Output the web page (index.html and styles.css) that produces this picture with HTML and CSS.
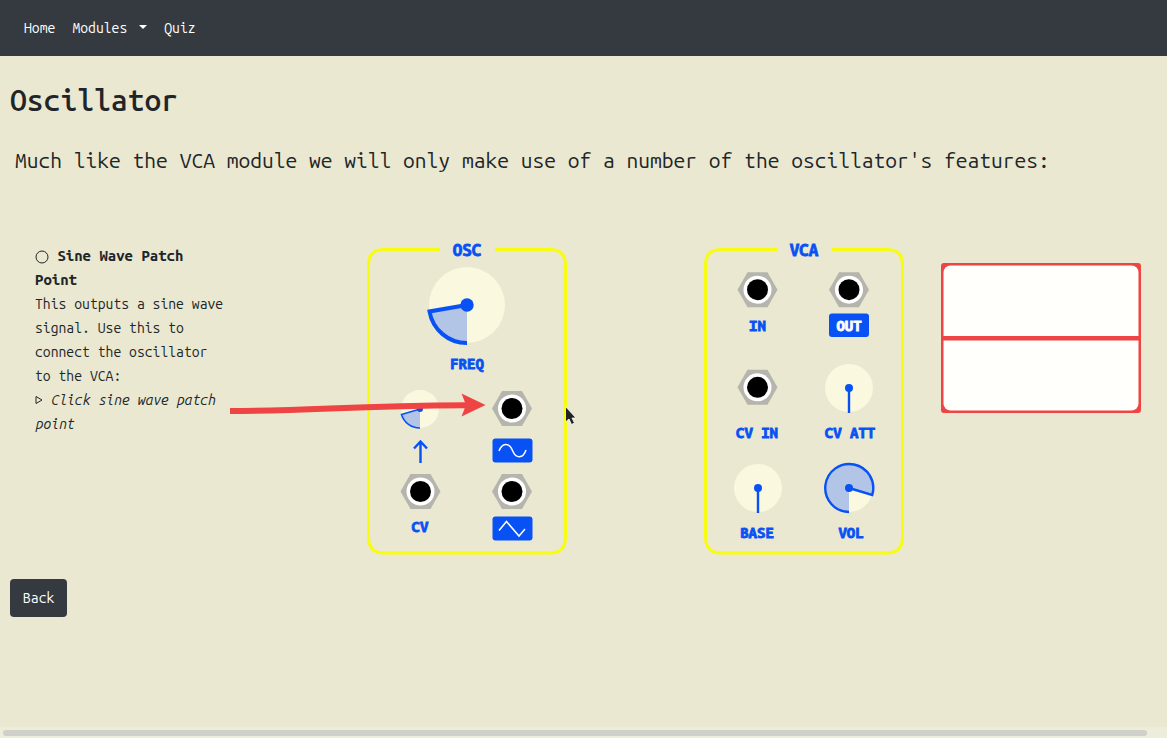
FILE: index.html
```html
<!DOCTYPE html>
<html lang="en">
<head>
<meta charset="utf-8">
<meta name="viewport" content="width=device-width, initial-scale=1">
<title>Oscillator</title>
<link rel="stylesheet" href="styles.css">
</head>
<body>
<nav class="navbar">
  <a href="#">Home</a>
  <a href="#" class="toggle">Modules<span class="caret"></span></a>
  <a href="#">Quiz</a>
</nav>
<main class="page">
  <h1>Oscillator</h1>
  <p class="lead">Much like the VCA module we will only make use of a number of the oscillator's features:</p>
  <section class="stage">
    <div class="notes">
      <strong><svg class="ring" viewBox="0 0 14 14" aria-hidden="true"><circle cx="7" cy="7" r="6"/></svg> Sine Wave Patch<br>Point</strong><br>
      This outputs a sine wave<br>signal. Use this to<br>connect the oscillator<br>to the VCA:<br>
      <em><svg class="tri" viewBox="0 0 8 10" aria-hidden="true"><path d="M1 1.5V8.5L7 5Z"/></svg> Click sine wave patch<br>point</em>
    </div>
    <div class="osc">
      <svg class="module" viewBox="367 240 200 316" role="img" aria-label="Oscillator module">
        <defs>
          <g id="jack">
            <path class="nut" d="M-20 0L-10-17.5H10L20 0L10 17.5H-10Z"/>
            <circle class="collar" r="14"/>
            <circle class="hole" r="10.5"/>
          </g>
        </defs>
        <path class="frame" d="M440 249.500H384Q368.500 249.500 368.500 265V537Q368.500 553 384 553H550Q565.500 553 565.500 537V265Q565.500 249.500 550 249.500H495"/>
        <text class="label title" x="467" y="256">OSC</text>
        <circle class="face" cx="467" cy="305" r="38"/>
        <path class="wedge" d="M467 305L429.500 311.500A38 38 0 0 0 467 343Z"/>
        <path class="arc thick" d="M467 305L429.500 311.500A38 38 0 0 0 467 343"/>
        <circle class="hub" cx="467" cy="305" r="6.700"/>
        <text class="label" x="467" y="369">FREQ</text>
        <circle class="face" cx="420" cy="409" r="19"/>
        <path class="wedge" d="M420 409L401.500 414.500A19 19 0 0 0 420 428Z"/>
        <path class="arc thin" d="M420 409L401.500 414.500A19 19 0 0 0 420 428"/>
        <circle class="hub" cx="420" cy="409" r="3"/>
        <path class="arc" d="M420.500 463V441.500M414 448.500L420.500 441.500L427 448.500"/>
        <use href="#jack" x="512" y="408.500"/>
        <use href="#jack" x="420.500" y="491.500"/>
        <use href="#jack" x="512" y="491.500"/>
        <rect class="plate" x="492.500" y="438.500" width="40" height="24" rx="3"/>
        <path class="wave" d="M499 451C502 443 509 442 512.500 450.500C516 459 523 459 526 450"/>
        <rect class="plate" x="492.500" y="516.500" width="40" height="24" rx="3"/>
        <path class="wave" d="M499 530.500L506.500 521.500L519 536L525 529"/>
        <text class="label" x="420" y="532">CV</text>
      </svg>
      <svg class="overlay" viewBox="230 380 360 60" aria-hidden="true">
        <path class="pointer" d="M230 411C315 411 350 405.500 466 405.200"/>
        <path class="pointer-head" d="M461.500 393.500L485.500 405L461.500 416.500L466 405Z"/>
        <path class="cursor" d="M565.500 406.500V422L569 419L571.500 424.500L574.500 423L572 418H576Z"/>
      </svg>
    </div>
    <div>
      <svg class="module" viewBox="704 240 200 316" role="img" aria-label="VCA module">
        <path class="frame" d="M777 249.500H721Q705.500 249.500 705.500 265V537Q705.500 553 721 553H887Q902.500 553 902.500 537V265Q902.500 249.500 887 249.500H832"/>
        <text class="label title" x="804" y="256">VCA</text>
        <use href="#jack" x="757.500" y="289.700"/>
        <use href="#jack" x="849" y="289.700"/>
        <use href="#jack" x="757.500" y="387.300"/>
        <text class="label" x="757.500" y="331">IN</text>
        <rect class="plate" x="829" y="313.500" width="40" height="23.500" rx="3"/>
        <text class="label light" x="849" y="331">OUT</text>
        <text class="label" x="757" y="438">CV IN</text>
        <circle class="face" cx="849" cy="388" r="24"/>
        <path class="arc" d="M849 388V413"/>
        <circle class="hub" cx="849" cy="388" r="4"/>
        <text class="label" x="850" y="438">CV ATT</text>
        <circle class="face" cx="758" cy="488" r="24"/>
        <path class="arc" d="M758 488V513"/>
        <circle class="hub" cx="758" cy="488" r="4"/>
        <text class="label" x="757" y="538">BASE</text>
        <circle class="face" cx="849" cy="488" r="24"/>
        <path class="wedge" d="M849 488L872.200 495A24 24 0 1 0 849 512Z"/>
        <path class="arc" d="M849 488L872.200 495A24 24 0 1 0 849 512"/>
        <circle class="hub" cx="849" cy="488" r="4"/>
        <text class="label" x="851" y="538">VOL</text>
      </svg>
    </div>
    <div class="scope">
      <svg viewBox="0 0 200 150" role="img" aria-label="Oscilloscope">
        <rect class="bezel" width="200" height="150" rx="3"/>
        <rect class="screen" x="2.500" y="2.500" width="195" height="145" rx="7"/>
        <path class="bezel" d="M2 73H198V77.500H2Z"/>
      </svg>
    </div>
  </section>
  <button type="button" class="back">Back</button>
</main>
<div class="scrollbar"><div class="thumb"></div></div>
</body>
</html>
```
FILE: styles.css
```css
* { box-sizing: border-box; }
body {
  margin: 0;
  min-height: 100vh;
  display: flex;
  flex-direction: column;
  background: #eae8d0;
  color: #212529;
  font-family: "Ubuntu Mono", "DejaVu Sans Mono", monospace;
  font-size: 14px;
  line-height: 24px;
}
.navbar {
  display: flex;
  gap: 1px;
  padding: 8px 16px;
  background: #343a40;
}
.navbar a {
  padding: 8px;
  color: #fff;
  text-decoration: none;
}
.toggle { display: flex; gap: 12px; }
.caret {
  height: 4px;
  margin-top: 9px;
  border: 4px solid transparent;
  border-top-color: #fff;
  border-bottom: 0;
}
.page { flex: 1; }
h1 {
  margin: 24px 10px 22px;
  font-size: 30px;
  line-height: 40px;
  font-weight: 500;
}
.lead {
  margin: 0 15px 62px;
  font-size: 21px;
  line-height: 36px;
}
.stage {
  display: grid;
  grid-template-columns: minmax(0, 332fr) minmax(0, 337fr) minmax(0, 237fr) minmax(0, 200fr);
  padding: 0 26px 0 35px;
}
.notes { padding-top: 4px; white-space: nowrap; }
.notes strong { font-size: 15px; font-weight: 600; }
.ring { width: 14px; height: 14px; vertical-align: -3px; fill: none; stroke: #212529; }
.tri { width: 8px; height: 10px; fill: none; stroke: #212529; }
.osc { position: relative; }
.module { display: block; width: 200px; }
.overlay {
  position: absolute;
  top: 140px;
  left: -137px;
  width: 360px;
}
.scope { padding-top: 23px; }
.scope svg { display: block; width: 200px; }
.frame { fill: none; stroke: #f8fc10; stroke-width: 3; }
.face { fill: #faf8de; }
.wedge { fill: #b2c5e7; }
.arc { fill: none; stroke: #0751f5; stroke-width: 2.4; }
.thick { stroke-width: 4; }
.thin { stroke-width: 1.6; }
.hub, .plate { fill: #0751f5; }
.nut { fill: #b5b5ad; }
.collar { fill: #fff; }
.hole { fill: #000; }
.wave { fill: none; stroke: #fff; stroke-width: 1.5; }
.label {
  fill: #0751f5;
  stroke: #0751f5;
  stroke-width: 0.8;
  font-size: 15px;
  font-weight: 700;
  text-anchor: middle;
}
.title { font-size: 17px; }
.light { fill: #fff; stroke: #fff; }
.pointer { fill: none; stroke: #ef4444; stroke-width: 6; }
.pointer-head { fill: #ef4444; }
.cursor { fill: #222; stroke: #fff; stroke-width: 0.8; }
.bezel { fill: #ef4444; }
.screen { fill: #fffffb; }
.back {
  display: block;
  margin: 23px 10px;
  padding: 7px 13px;
  border: 0;
  border-radius: 4px;
  background: #343a40;
  color: #fff;
  font: inherit;
}
.scrollbar { padding: 3px 20px 2px 3px; background: #eeecda; }
.thumb { height: 6px; border-radius: 3px; background: #d0d0ca; }
```
